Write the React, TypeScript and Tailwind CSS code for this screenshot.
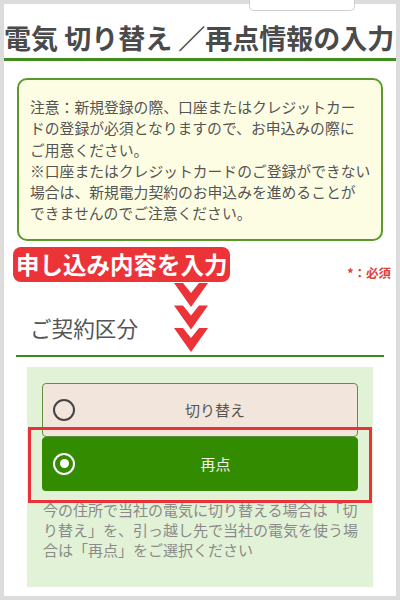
import React from "react";

const jp = "font-['Noto_Sans_CJK_JP','Noto_Sans',sans-serif]";

function Chevrons() {
  return (
    <svg width="34" height="70" viewBox="0 0 34 70" className="absolute left-[158px] top-[1px]">
      {[0, 22.5, 45].map((y) => (
        <polygon
          key={y}
          points={`0,${y} 9,${y} 17,${y + 10} 25,${y} 34,${y} 17,${y + 24}`}
          fill="#ec3338"
          strokeLinejoin="round"
        />
      ))}
    </svg>
  );
}

function Radio({ checked }: { checked: boolean }) {
  if (checked) {
    return (
      <span className="flex h-[22px] w-[22px] items-center justify-center rounded-full border-2 border-white">
        <span className="h-[9px] w-[9px] rounded-full bg-white" />
      </span>
    );
  }
  return <span className="h-[22px] w-[22px] rounded-full border-2 border-[#444]" />;
}

export default function App() {
  return (
    <div className={`relative h-[600px] w-[400px] overflow-hidden bg-[#dcdcdc] p-[4px] ${jp}`}>
      {/* tab peeking in at the top */}
      <div className="absolute left-[249px] top-0 h-[11px] w-[106px] rounded-b-[5px] border border-t-0 border-[#cfcfcf] bg-white" />

      <div className="h-full bg-white">
        {/* page title */}
        <div className="h-[57px] overflow-hidden whitespace-nowrap border-b-[3px] border-[#3f8f1f] pt-[20px]">
          <h1 className="text-[27px] font-bold leading-[27px] text-[#4a4a4a]">
            電気 切り替え ／再点情報の入力
          </h1>
        </div>

        {/* notice */}
        <div className="ml-[13px] mt-[17px] w-[366px] rounded-[10px] border-2 border-[#5a9a2a] bg-[#fdfde3] px-[11px] pb-[15px] pt-[16px]">
          <p className="whitespace-nowrap text-[14.8px] leading-[21.3px] text-[#555]">
            注意：新規登録の際、口座またはクレジットカー
            <br />
            ドの登録が必須となりますので、お申込みの際に
            <br />
            ご用意ください。
            <br />
            ※口座またはクレジットカードのご登録ができない
            <br />
            場合は、新規電力契約のお申込みを進めることが
            <br />
            できませんのでご注意ください。
          </p>
        </div>

        {/* step label */}
        <div className="mt-[6px] flex items-end justify-between pl-[9px] pr-[5px]">
          <div className="h-[35px] w-[217px] whitespace-nowrap rounded-[8px] bg-[#ec3338] px-[3px] text-[23.5px] font-bold leading-[35px] text-white">
            申し込み内容を入力
          </div>
          <span className="pb-[3px] text-[12.5px] font-bold leading-[13px] text-[#d9413a]">*：必須</span>
        </div>

        {/* section heading */}
        <div className="relative mx-[12px] h-[75px] border-b-2 border-[#3f8a1f] pl-[14px] pt-[35px]">
          <h2 className="text-[21.6px] leading-[22px] text-[#555]">ご契約区分</h2>
          <Chevrons />
        </div>

        {/* options panel */}
        <div className="relative ml-[23px] mt-[10px] h-[220px] w-[346px] bg-[#e2f2d6] px-[15px] pt-[16px]">
          <div className="flex h-[54px] items-center rounded-[4px] border border-[#5f8f3f] bg-[#f2e6dc] pl-[10px]">
            <Radio checked={false} />
            <span className="flex-1 pr-[2px] text-center text-[15px] text-[#555]">切り替え</span>
          </div>
          <div className="flex h-[54px] items-center rounded-[4px] bg-[#338b00] pl-[11px]">
            <Radio checked />
            <span className="flex-1 pr-[2px] text-center text-[15px] text-[#f4f4e8]">再点</span>
          </div>
          <p className="mt-[9px] whitespace-nowrap pl-[1px] text-[15px] leading-[20px] text-[#8a8a8a]">
            今の住所で当社の電気に切り替える場合は「切
            <br />
            り替え」を、引っ越し先で当社の電気を使う場
            <br />
            合は「再点」をご選択ください
          </p>

          {/* highlight annotation */}
          <div className="absolute left-[1px] top-[60px] h-[76px] w-[344px] border-[3px] border-[#e8323a]" />
        </div>
      </div>
    </div>
  );
}
